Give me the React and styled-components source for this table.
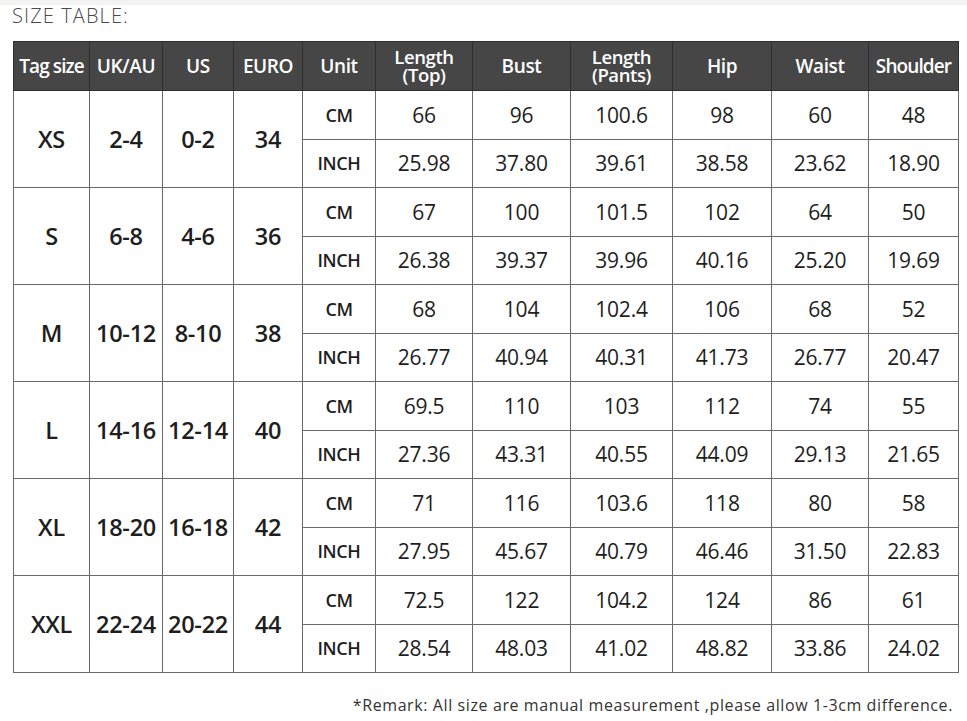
import React from "react";
import styled, { createGlobalStyle } from "styled-components";

const Global = createGlobalStyle`
  html, body { margin: 0; padding: 0; background: #fff; }
  body { font-family: "Open Sans", "Liberation Sans", sans-serif; }
`;

const Page = styled.div`
  width: 967px;
  height: 721px;
  display: flex;
  flex-direction: column;
  background: #fff;
  overflow: hidden;
`;

const TopBand = styled.div`
  height: 5px;
  background: #f3f3f3;
  flex: none;
`;

const Title = styled.div`
  padding: 1px 0 0 12px;
  height: 35px;
  font-family: "Open Sans", sans-serif;
  font-weight: 300;
  font-size: 20px;
  line-height: 20px;
  color: #4a4a4a;
  letter-spacing: 1.1px;
  flex: none;
`;

const Table = styled.table`
  margin-left: 13px;
  width: 946px;
  border-collapse: collapse;
  table-layout: fixed;
  border: 1px solid #5c5c5c;
  flex: none;
`;

const HeadCell = styled.th`
  height: 48px;
  padding: 0;
  background: #464646;
  color: #fff;
  border: 1px solid #2e2e2e;
  font-family: "Open Sans", sans-serif;
  font-weight: 600;
  font-size: ${(p) => (p.$two ? "18.5px" : "19px")};
  line-height: ${(p) => (p.$two ? "19px" : "22px")};
  letter-spacing: ${(p) => (p.$tight ? "-0.9px" : "-0.4px")};
  text-align: center;
  vertical-align: middle;
  white-space: nowrap;
`;

const HeadLine = styled.span`
  display: block;
  height: 18px;
  line-height: 18px;
`;

const Cell = styled.td`
  height: 47.5px;
  padding: 0;
  border: 1px solid #6a6a6a;
  text-align: center;
  vertical-align: middle;
  color: #1e1e1e;
  font-family: "Open Sans", sans-serif;
  font-size: ${(p) => (p.$kind === "unit" ? "18px" : p.$kind === "size" ? "23.5px" : "21px")};
  font-weight: ${(p) => (p.$kind === "unit" || p.$kind === "size" ? 600 : 400)};
  letter-spacing: ${(p) => (p.$kind === "unit" ? "-0.4px" : p.$kind === "size" ? "-0.3px" : "-0.2px")};
  white-space: nowrap;
`;

const Remark = styled.div`
  margin-top: 21px;
  padding-right: 14px;
  text-align: right;
  font-family: "Open Sans", sans-serif;
  font-size: 16px;
  color: #333;
  letter-spacing: 0.6px;
`;

const widths = [76, 73, 71, 69, 73, 97, 98, 102, 99, 97, 90];

const headers = [
  ["Tag size"],
  ["UK/AU"],
  ["US"],
  ["EURO"],
  ["Unit"],
  ["Length", "(Top)"],
  ["Bust"],
  ["Length", "(Pants)"],
  ["Hip"],
  ["Waist"],
  ["Shoulder"],
];

const data = [
  ["XS", "2-4", "0-2", "34", ["66", "96", "100.6", "98", "60", "48"], ["25.98", "37.80", "39.61", "38.58", "23.62", "18.90"]],
  ["S", "6-8", "4-6", "36", ["67", "100", "101.5", "102", "64", "50"], ["26.38", "39.37", "39.96", "40.16", "25.20", "19.69"]],
  ["M", "10-12", "8-10", "38", ["68", "104", "102.4", "106", "68", "52"], ["26.77", "40.94", "40.31", "41.73", "26.77", "20.47"]],
  ["L", "14-16", "12-14", "40", ["69.5", "110", "103", "112", "74", "55"], ["27.36", "43.31", "40.55", "44.09", "29.13", "21.65"]],
  ["XL", "18-20", "16-18", "42", ["71", "116", "103.6", "118", "80", "58"], ["27.95", "45.67", "40.79", "46.46", "31.50", "22.83"]],
  ["XXL", "22-24", "20-22", "44", ["72.5", "122", "104.2", "124", "86", "61"], ["28.54", "48.03", "41.02", "48.82", "33.86", "24.02"]],
];

export default function App() {
  return (
    <Page>
      <Global />
      <TopBand />
      <Title>SIZE TABLE:</Title>
      <Table>
        <colgroup>
          {widths.map((w, i) => (
            <col key={i} style={{ width: w }} />
          ))}
        </colgroup>
        <thead>
          <tr>
            {headers.map((h, i) => (
              <HeadCell key={i} $two={h.length > 1} $tight={i === 0 || i === 10}>
                {h.length > 1
                  ? h.map((line, j) => <HeadLine key={j}>{line}</HeadLine>)
                  : h[0]}
              </HeadCell>
            ))}
          </tr>
        </thead>
        <tbody>
          {data.map(([tag, uk, us, eu, cm, inch]) => (
            <React.Fragment key={tag}>
              <tr>
                <Cell rowSpan={2} $kind="size">{tag}</Cell>
                <Cell rowSpan={2} $kind="size">{uk}</Cell>
                <Cell rowSpan={2} $kind="size">{us}</Cell>
                <Cell rowSpan={2} $kind="size">{eu}</Cell>
                <Cell $kind="unit">CM</Cell>
                {cm.map((v, i) => (
                  <Cell key={i}>{v}</Cell>
                ))}
              </tr>
              <tr>
                <Cell $kind="unit">INCH</Cell>
                {inch.map((v, i) => (
                  <Cell key={i}>{v}</Cell>
                ))}
              </tr>
            </React.Fragment>
          ))}
        </tbody>
      </Table>
      <Remark>*Remark: All size are manual measurement ,please allow 1-3cm difference.</Remark>
    </Page>
  );
}
